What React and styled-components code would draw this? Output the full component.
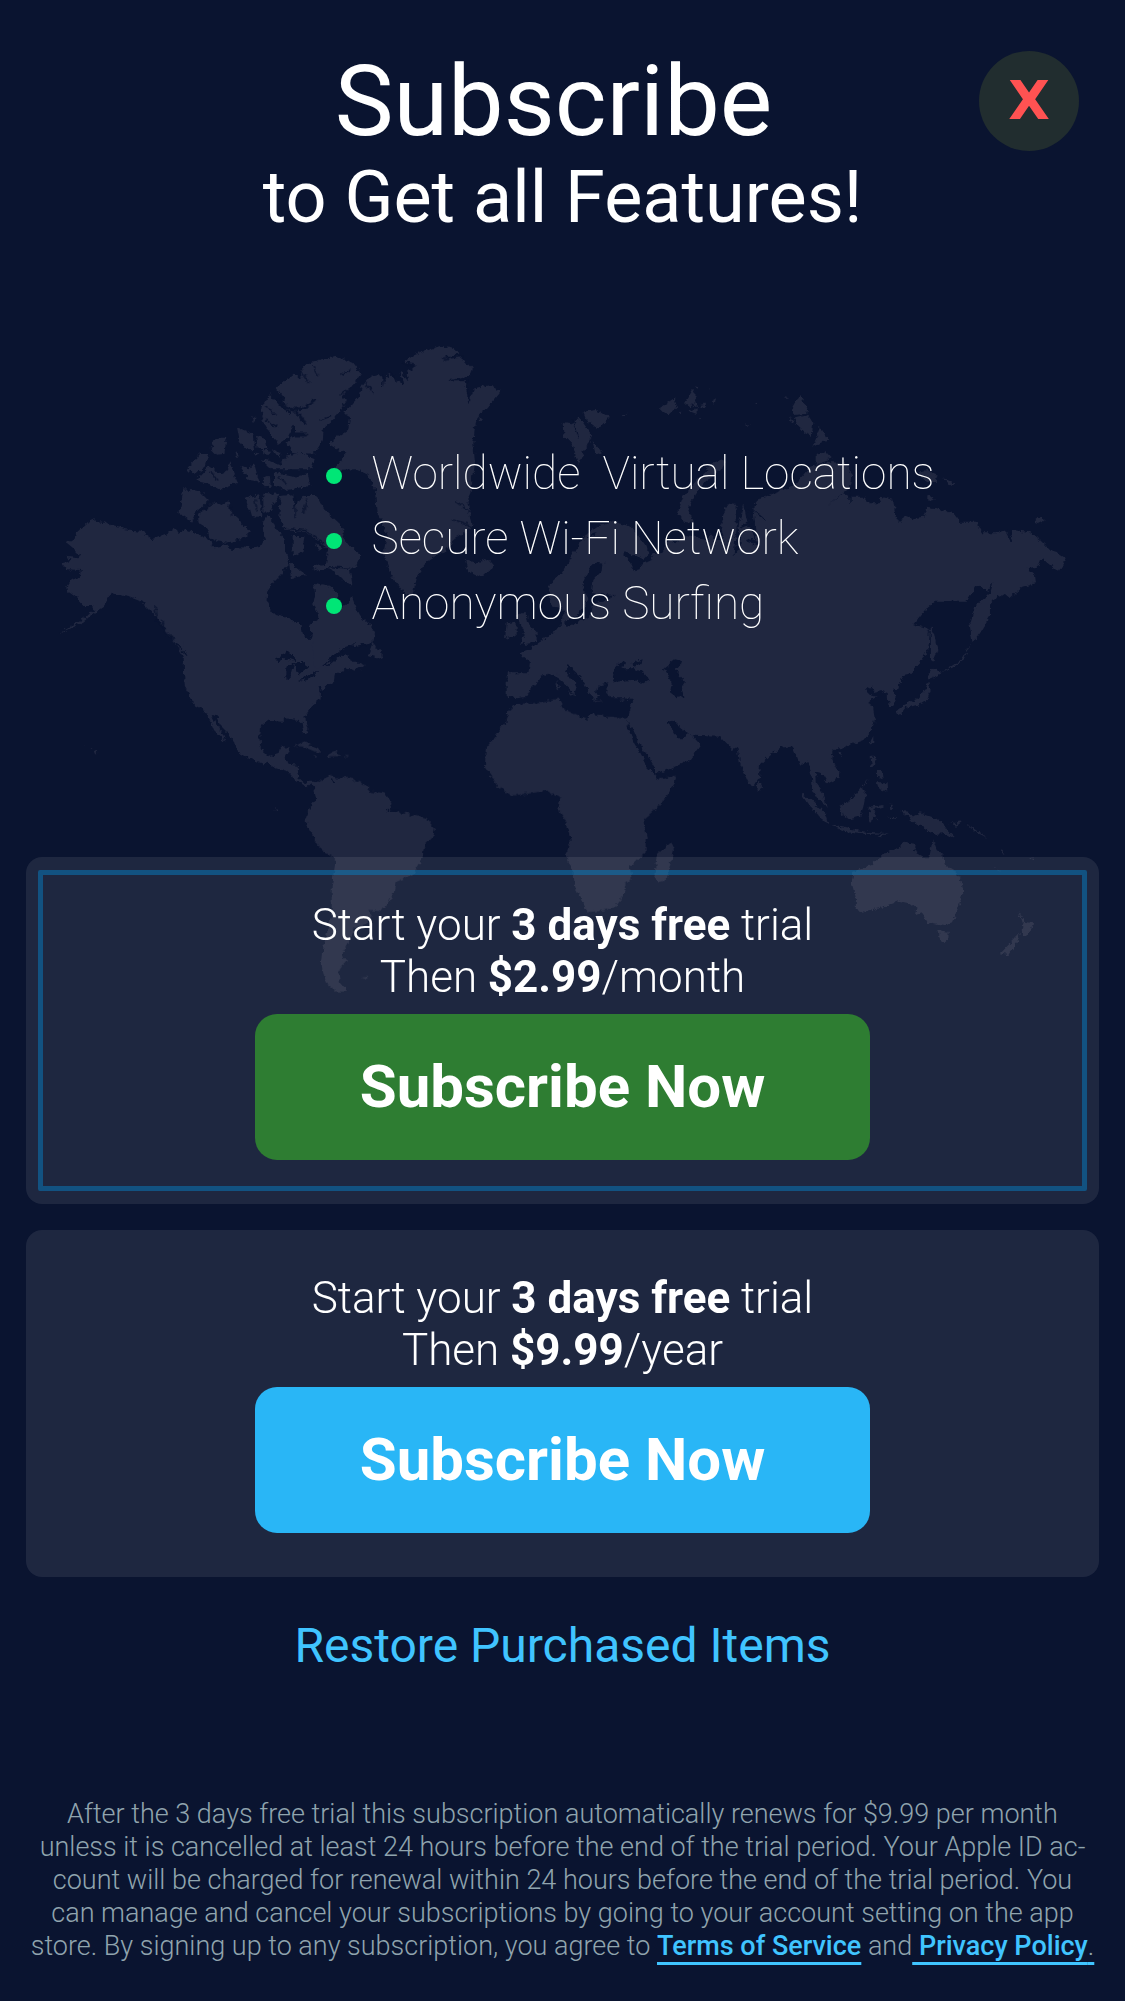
import React from "react";
import styled, { createGlobalStyle } from "styled-components";

const color = {
  page: "#0a1430",
  land: "#202740",
  panel: "rgba(235, 230, 235, 0.09)",
  outline: "rgba(8, 122, 188, 0.52)",
  green: "#2e7d32",
  blue: "#29b6f6",
  link: "#40c4ff",
  dot: "#00e676",
  closeBg: "#212d2f",
  close: "#ff5252",
  muted: "#90a4ae",
};

const GlobalStyle = createGlobalStyle`
  *, *::before, *::after { box-sizing: border-box; }
  body {
    margin: 0;
    background: ${color.page};
    color: #fff;
    font-family: Roboto, "Liberation Sans", sans-serif;
  }
`;

const Page = styled.main`
  position: relative;
  display: flex;
  flex-direction: column;
  min-height: 100vh;
  padding: 51px 26px 36px;
  overflow: hidden;
`;

const MapSvg = styled.svg`
  position: absolute;
  top: 0;
  left: 0;
  width: 100%;
  height: auto;
  pointer-events: none;
`;

const Header = styled.header`
  position: relative;
  text-align: center;
`;

const Title = styled.h1`
  margin: 0;
  padding-right: 18px;
  font-size: 99px;
  line-height: 100px;
  font-weight: 400;
`;

const Subtitle = styled.p`
  margin: 0;
  font-size: 72px;
  line-height: 94px;
  font-weight: 400;
`;

const CloseButton = styled.button`
  position: absolute;
  top: 0;
  right: 20px;
  width: 100px;
  height: 100px;
  padding: 0;
  border: 0;
  border-radius: 50%;
  background: ${color.closeBg};
  color: ${color.close};
  font: 700 54px/100px "DejaVu Sans", sans-serif;
  cursor: pointer;
`;

const Features = styled.ul`
  position: relative;
  margin: 196px 0 221px;
  padding: 0 0 0 28%;
  list-style: none;
`;

const Feature = styled.li`
  display: flex;
  align-items: center;
  gap: 29px;
  font-size: 46px;
  line-height: 65px;
  font-weight: 100;
  white-space: pre-wrap;

  &::before {
    content: "";
    flex: none;
    width: 16px;
    height: 16px;
    margin-top: 4px;
    border-radius: 50%;
    background: ${color.dot};
  }
`;

const Plans = styled.div`
  position: relative;
  display: grid;
  gap: 26px;
`;

const Plan = styled.section`
  position: relative;
  display: flex;
  flex-direction: column;
  align-items: center;
  gap: 11px;
  padding: 42px 24px 44px;
  border-radius: 16px;
  background: ${color.panel};

  &::after {
    content: "";
    display: ${(p) => (p.$selected ? "block" : "none")};
    position: absolute;
    inset: 13px 12px;
    border: 5px solid ${color.outline};
    border-radius: 2px;
    pointer-events: none;
  }
`;

const Offer = styled.p`
  margin: 0;
  font-size: 44px;
  line-height: 52px;
  font-weight: 300;
  text-align: center;

  strong { font-weight: 700; }
`;

const SubscribeButton = styled.button`
  width: 60%;
  height: 146px;
  border: 0;
  border-radius: 22px;
  background: ${(p) => p.$tone};
  color: #fff;
  font: 700 60px/72px Roboto, "Liberation Sans", sans-serif;
  cursor: pointer;
`;

const Restore = styled.a`
  position: relative;
  align-self: center;
  margin-top: 39px;
  color: ${color.link};
  font-size: 48px;
  line-height: 60px;
  text-decoration: none;
`;

const Legal = styled.p`
  position: relative;
  margin: 122px 4px 0;
  color: ${color.muted};
  font-size: 27px;
  line-height: 33px;
  font-weight: 300;
  text-align: center;
`;

const LegalLink = styled.a`
  color: ${color.link};
  font-weight: 500;
  text-decoration: underline ${color.link} 3px;
  text-decoration-skip-ink: none;
  text-underline-offset: 7px;
  white-space: pre;

  span {
    color: ${color.muted};
    font-weight: 300;
  }
`;

/* Coastlines, grouped by survey sheet: each sheet has its own origin, three units to a pixel. */
const sheets = [
  {
    origin: [40, 320],
    land: [
      "M165 598L200 612 255 628 300 632 337 657 375 642 405 620 412 640 435 628 470 642 500 655 520 682 560 675 575 690 600 682 640 685 665 680 675 660 670 640 668 610 682 585 700 605 710 630 735 660 735 690 745 710 742 735 720 765 700 785 683 810 680 840 695 870 705 882 740 890 770 905 785 915 788 940 808 962 815 945 808 915 830 900 833 880 820 850 825 825 822 790 860 795 890 815 893 840 905 860 925 850 935 828 945 855 960 885 990 915 1005 940 1000 965 960 975 920 985 885 1000 870 1030 850 1050 850 1090 435 1090 432 1010 410 975 380 940 360 905 330 870 305 845 270 832 235 825 215 818 205 840 190 860 160 880 130 905 100 920 55 942 95 915 135 895 160 870 155 855 130 855 112 835 85 815 82 800 95 780 120 770 122 750 80 748 65 730 95 722 78 710 115 715 120 705 100 685 80 668 108 650 112 635 140 610Z",
      "M1000 965L985 1005 1010 1012 1030 1020 1025 990 1008 985Z",
      "M474 585L520 543 545 555 565 540 575 580 598 600 628 635 605 657 560 668 530 664 508 652 498 620 476 607Z",
      "M430 508L480 513 507 540 472 572 455 605 418 580Z",
      "M722 528L760 523 765 560 790 528 832 528 852 568 880 593 914 625 908 650 928 678 964 705 947 740 930 747 937 797 900 774 870 744 825 754 818 738 858 735 863 695 848 672 833 664 800 636 765 634 733 629 718 590Z",
      "M443 447L480 402 505 402 494 440 462 462Z",
      "M466 482L508 438 545 463 558 456 568 427 594 487 540 508 508 492Z",
      "M588 322L637 343 645 387 620 388 596 362ZM648 346L677 358 683 387 653 387ZM512 387L528 353 560 353 553 402 528 404Z",
      "M598 438L625 448 642 428 658 488 628 483ZM662 418L690 422 720 435 740 407 780 397 824 418 813 448 740 448 695 448ZM702 458L760 470 804 463 811 497 740 510 702 498ZM668 478L690 468 692 500 670 502Z",
      "M670 518L718 522 693 572 670 582ZM617 533L657 523 668 592 633 588ZM633 286L650 293 642 307ZM747 723L798 765 753 777ZM758 648L793 648 788 692 758 712ZM826 673L848 680 840 694ZM698 388L722 398 714 412ZM668 390L690 392 688 402 670 400ZM585 390L598 405 592 415ZM640 398L655 400 650 410Z",
      "M690 222L722 260 747 280 758 320 747 352 715 374 678 322 664 290 670 250Z",
      "M783 153L805 128 850 116 890 111 940 128 964 160 932 205 907 230 922 240 882 297 852 322 848 362 822 402 758 397 738 370 765 345 765 320 745 300 755 275 720 250 735 240 707 205 765 158 785 178Z",
    ],
    channels:
      "M715 240Q765 295 825 240M770 275L795 310M750 345L800 345",
    inlets:
      "M785 155L805 185M900 225L930 205M480 580Q500 560 525 545M570 560L575 585M645 540L650 570M765 530L765 590M800 540L790 580M735 625L800 632 850 670M345 860L350 900 400 960M365 900L380 945M860 690L830 665M870 740L930 745M512 455L530 480M715 470L735 490M680 260L705 285M680 300L710 320M820 140L835 165M930 150L905 165M840 300L870 290",
  },
  {
    origin: [340, 320],
    land: [
      "M250 95L300 78 330 80 360 100 315 115 365 112 395 145 390 165 330 182 375 182 385 250 405 205 450 195 482 212 440 265 415 285 405 320 400 370 405 430 395 500 385 540 398 620 340 660 330 680 260 725 235 760 215 830 190 815 155 770 130 700 140 650 125 600 110 580 105 510 85 465 50 448 -20 450 15 400 -35 370 25 330 30 290 12 280 60 225 65 200 90 170 125 165 135 190 145 160 190 195 180 150 205 185 200 160 225 135 190 125 210 110Z",
      "M418 288L432 298 420 306ZM375 720L400 730 440 715 463 740 420 772 385 755Z",
      "M668 305L695 310 720 295 755 345 740 380 715 435 695 370 670 345ZM730 275L770 270 807 290 775 328 740 300ZM755 360L785 395 768 405ZM845 286L860 284 850 290Z",
      "M540 880L560 880 565 910 590 940 590 965 540 975 555 940 530 890ZM500 910L530 905 530 945 495 958Z",
    ],
    channels: "",
    inlets:
      "M310 118L365 108M328 182L380 180M80 190L100 220M130 165L128 200M155 160L170 185M350 545L390 575M340 600L395 620M225 135L190 128M700 300L715 350M375 180L390 240",
  },
  {
    origin: [560, 340],
    land: [
      "M-35 760L-30 730 5 700 40 640 70 590 110 560 160 545 215 560 260 620 265 640 245 660 195 640 215 680 230 700 250 670 270 665 280 640 305 635 330 600 345 610 380 585 440 600 455 580 465 600 490 600 480 560 500 490 530 495 530 560 520 650 545 610 535 560 550 490 560 540 590 610 580 500 600 475 640 460 680 445 700 440 750 380 800 365 855 370 875 400 870 440 805 495 850 460 870 470 915 470 925 490 955 490 965 470 1000 480 1005 520 1020 550 1035 525 1060 535 1090 530 1100 500 1130 505 1180 520 1200 545 1250 545 1268 580 1310 580 1340 570 1350 600 1355 570 1405 575 1440 600 1475 635 1490 640 1520 658 1495 695 1470 675 1445 655 1435 680 1400 685 1425 705 1428 730 1390 740 1350 775 1335 762 1310 770 1290 795 1290 830 1275 855 1260 880 1238 908 1228 850 1245 800 1290 760 1300 728 1280 755 1270 740 1245 742 1220 785 1180 785 1125 785 1095 810 1060 853 1085 860 1110 870 1105 930 1070 980 1045 1005 1030 1008 1015 1035 1010 1050 1000 1045 1008 1075 1000 1095 985 1095 983 1060 965 1050 945 1055 935 1040 915 1050 930 1065 950 1070 925 1085 940 1110 945 1140 935 1170 910 1200 870 1215 845 1225 830 1225 810 1240 820 1265 838 1300 835 1315 805 1330 800 1325 785 1300 765 1295 768 1330 790 1360 800 1400 775 1380 760 1355 755 1310 745 1265 720 1275 695 1215 680 1220 655 1225 600 1275 597 1310 578 1342 565 1325 540 1270 532 1220 515 1230 480 1190 400 1187 365 1165 340 1142 325 1145 350 1195 370 1195 390 1180 422 1215 390 1260 300 1300 285 1300 255 1240 225 1190 200 1150 195 1140 205 1130 218 1080 195 1075 150 1075 138 1050 145 1030 125 1035 105 1050 120 1070 100 1080 80 1045 65 1020 25 980 20 995 45 1030 52 1045 45 1062 0 1020 -30 1000 -55 1010 -70 1030 -90 1050 -100 1070 -130 1075 -160 1070 -160 1000 -95 1000 -90 965 -120 940 -90 930 -75 915 -50 900 -20 880 5 850 10 830 10 805 -20 800Z",
      "M490 360L495 380 430 430 400 470 385 510 400 550 370 545 352 520 370 470 410 420 460 370Z",
      "M300 205L345 175 350 200 325 225 310 215ZM375 190L400 150 412 175 390 200ZM405 180L412 205 400 195ZM420 195L440 190 430 205ZM450 185L468 175 465 192ZM385 215L410 205 410 225ZM415 230L425 235 415 237ZM405 138L418 136 412 143ZM445 142L455 147 447 148ZM585 186L595 185 590 190ZM558 250L570 256 562 257ZM360 215L370 220 362 223ZM675 172L688 174 680 177Z",
      "M718 165L742 205 738 222 700 225 695 205ZM705 235L745 225 760 245 755 288 735 280 710 255ZM780 262L805 300 775 315 757 320ZM770 345L795 332 815 355 770 370ZM686 232L702 240 695 245Z",
      "M1075 395L1100 390 1135 405 1130 425 1100 430ZM1150 415L1185 430 1165 438ZM1105 465L1125 480 1105 482ZM1423 545L1440 530 1455 540 1435 550ZM1112 860L1122 880 1132 930 1120 965 1113 960Z",
    ],
    water: [
      "M105 665L130 668 128 690 100 720 95 760 165 765 130 785 100 790 90 830 50 850 20 862 15 845 50 825 70 800 85 775 65 740 80 700Z",
    ],
    channels: "M195 642L250 662M555 500L580 545 545 560M590 610L560 600M1340 572L1355 600",
    inlets: "M20 975L60 1010M585 515L615 540M870 440L870 490M60 600L110 580",
  },
  {
    origin: [220, 620],
    land: [
      "M890 250L935 250 1020 235 1028 265 1060 280 1100 298 1115 280 1160 290 1220 292 1225 330 1250 375 1275 420 1305 462 1315 475 1370 467 1360 500 1325 550 1270 600 1280 650 1280 695 1230 740 1235 775 1215 795 1212 825 1185 860 1150 872 1100 877 1085 840 1065 800 1060 760 1038 705 1052 660 1035 600 1015 570 1020 535 980 512 930 520 875 527 835 500 795 440 797 385 855 310 865 275Z",
      "M1352 668L1362 690 1340 780 1318 787 1303 765 1310 705Z",
      "M280 490L335 465 350 475 380 470 430 490 450 512 495 520 518 550 510 570 560 580 620 597 645 625 640 650 612 680 608 715 580 765 530 785 525 815 485 875 445 870 455 890 440 910 400 925 385 970 368 1000 378 1025 355 1055 360 1085 385 1115 350 1115 320 1090 305 1040 310 980 335 880 335 800 347 720 300 685 265 625 253 605 265 570 288 540Z",
      "M425 1072L450 1070 440 1080ZM320 405L345 395 362 408 325 410ZM1010 180L1018 205 1010 210ZM1012 158L1018 165 1014 175ZM1040 215L1068 222 1055 230ZM1120 238L1145 242 1130 246ZM1198 240L1215 236 1205 246ZM280 405L295 410 285 413ZM370 408L385 408 378 412Z",
      "M222 377L250 366 280 378 304 394 285 395 250 380Z",
    ],
    water: [
      "M165 120L200 95 225 108 228 122 200 115 180 122ZM200 140L222 130 215 150 210 175 200 180ZM222 128L245 126 265 140 245 155 235 165 228 140ZM235 182L262 168 298 152 285 165 260 177Z",
      "M1175 175L1180 150 1205 125 1215 130 1205 145 1240 145 1265 155 1288 180 1270 190 1230 180 1190 185ZM1235 130L1265 118 1260 135 1240 140Z",
      "M1222 305L1240 330 1255 365 1280 400 1305 445 1305 466 1285 445 1260 400 1240 365Z",
    ],
    channels: "",
    inlets: "M310 138L370 85 440 75M500 572L530 570M335 480L338 490",
  },
  {
    origin: [660, 620],
    land: [
      "M815 140L845 160 815 175 800 175ZM805 185L812 210 800 245 770 255 735 265 720 285 712 270 740 250 775 235 795 210Z",
      "M640 345L640 365 632 375 632 360ZM535 395L550 393 545 408Z",
      "M632 410L647 410 645 440 635 440ZM650 450L665 450 668 475 652 470ZM650 490L680 490 682 515 655 505ZM605 500L630 475 612 498Z",
      "M537 558L565 545 600 505 618 515 610 560 600 590 570 598 545 580ZM420 518L450 535 500 585 508 612 485 600 450 560Z",
      "M460 485L480 510 497 555 480 545 462 510ZM508 615L560 625 620 635 690 640 620 642 550 632Z",
      "M630 560L668 555 665 562 640 568 655 605 640 590 635 612 625 595ZM680 590L715 592 700 597ZM692 545L700 560 694 570Z",
      "M720 572L745 575 760 590 780 580 840 600 860 630 885 655 850 640 820 642 790 625 760 605ZM295 482L307 505 292 515Z",
      "M818 658L830 690 850 705 855 735 880 750 905 785 910 820 895 865 880 905 850 918 800 908 785 880 765 885 768 865 750 850 715 842 660 865 610 878 587 870 588 835 575 790 580 755 640 730 665 705 690 690 712 688 730 665 768 672 762 695 790 712 808 712Z",
      "M835 930L866 935 865 958 850 972 840 955ZM1075 875L1095 905 1120 910 1105 945 1085 945 1090 920ZM1080 938L1072 965 1045 1005 1022 1000 1045 975Z",
      "M845 158L875 138 905 118 935 65 910 120 880 142ZM870 610L890 612 900 600 905 606 890 618ZM920 612L985 655 945 635ZM1000 738L1025 757 1010 750ZM1110 715L1122 712 1118 719ZM1020 685L1035 702 1028 704ZM655 650L680 640 668 652Z",
    ],
    water: ["M12 145L45 118 63 122 60 140 45 145 55 165 75 185 65 200 70 230 50 235 30 220 35 190Z"],
  },
  {
    origin: [60, 640],
    land: [
      "M370 0L372 100 375 145 405 195 430 208 450 240 462 270 490 300 497 305 485 275 465 248 455 225 468 228 480 255 500 275 533 325 533 337 570 358 610 373 625 368 650 385 685 395 705 420 740 443 752 432 765 440 775 430 765 425 745 425 735 432 715 415 712 400 717 375 680 370 677 350 690 322 660 323 655 342 630 350 610 335 600 315 598 290 600 262 625 242 665 245 675 235 715 240 725 250 728 270 740 285 747 275 737 240 737 222 750 205 778 180 780 160 800 138 822 122 825 100 860 85 885 92 915 75 900 68 875 68 865 45 840 50 805 80 760 80 760 0Z",
      "M90 320L98 324 92 325ZM103 330L115 337 107 344ZM72 316L77 317 74 319ZM645 508L655 510 649 514Z",
    ],
    water: [
      "M645 60L680 35 705 48 708 62 680 55 660 62ZM680 80L702 70 695 90 690 115 680 120ZM702 68L725 66 745 80 725 95 715 105 708 80ZM715 122L742 108 778 92 765 105 740 117Z",
    ],
    channels: "",
    inlets: "M790 78L850 25 880 15M345 5L380 45M778 140L785 175",
  },
];

const sheetTransform = ({ origin: [x, y] }) => `translate(${x} ${y}) scale(0.33333)`;

function WorldMap() {
  return (
    <MapSvg viewBox="0 0 1125 1010" aria-hidden="true">
      <defs>
        <filter
          id="coast"
          x="0"
          y="0"
          width="1125"
          height="1010"
          filterUnits="userSpaceOnUse"
          colorInterpolationFilters="sRGB"
        >
          <feTurbulence type="fractalNoise" baseFrequency="0.2" numOctaves="3" seed="4" result="n" />
          <feDisplacementMap in="SourceGraphic" in2="n" scale="6" xChannelSelector="R" yChannelSelector="G" />
        </filter>
      </defs>
      <g filter="url(#coast)" strokeLinecap="round" strokeLinejoin="round">
        {sheets.map((s, i) => (
          <g key={i} transform={sheetTransform(s)}>
            <path d={s.land.join("")} fill={color.land} />
          </g>
        ))}
        {sheets.map((s, i) => (
          <g key={i} transform={sheetTransform(s)}>
            {s.water && <path d={s.water.join("")} fill={color.page} />}
            {s.channels && <path d={s.channels} fill="none" stroke={color.page} strokeWidth="9" />}
            {s.inlets && <path d={s.inlets} fill="none" stroke={color.page} strokeWidth="4" />}
          </g>
        ))}
      </g>
    </MapSvg>
  );
}

const features = ["Worldwide  Virtual Locations", "Secure Wi-Fi Network", "Anonymous Surfing"];

const plans = [
  { price: "$2.99", period: "month", tone: color.green, selected: true },
  { price: "$9.99", period: "year", tone: color.blue, selected: false },
];

export default function App() {
  return (
    <>
      <GlobalStyle />
      <Page>
        <WorldMap />
        <Header>
          <Title>Subscribe</Title>
          <Subtitle>to Get all Features!</Subtitle>
          <CloseButton type="button" aria-label="Close">X</CloseButton>
        </Header>
        <Features>
          {features.map((f) => (
            <Feature key={f}>{f}</Feature>
          ))}
        </Features>
        <Plans>
          {plans.map((p) => (
            <Plan key={p.period} $selected={p.selected}>
              <Offer>
                Start your <strong>3 days free</strong> trial
                <br />
                Then <strong>{p.price}</strong>/{p.period}
              </Offer>
              <SubscribeButton type="button" $tone={p.tone}>Subscribe Now</SubscribeButton>
            </Plan>
          ))}
        </Plans>
        <Restore href="#restore">Restore Purchased Items</Restore>
        <Legal>
          After the 3 days free trial this subscription automatically renews for $9.99 per month
          unless it is cancelled at least 24 hours before the end of the trial period. Your Apple
          ID ac&shy;count will be charged for renewal within 24 hours before the end of the trial
          period. You can manage and cancel your subscriptions by going to your account setting on
          the app store. By signing up to any subscription, you agree to{" "}
          <LegalLink href="#terms">Terms of Service</LegalLink> and
          <LegalLink href="#privacy"> Privacy Policy<span>.</span></LegalLink>
        </Legal>
      </Page>
    </>
  );
}
